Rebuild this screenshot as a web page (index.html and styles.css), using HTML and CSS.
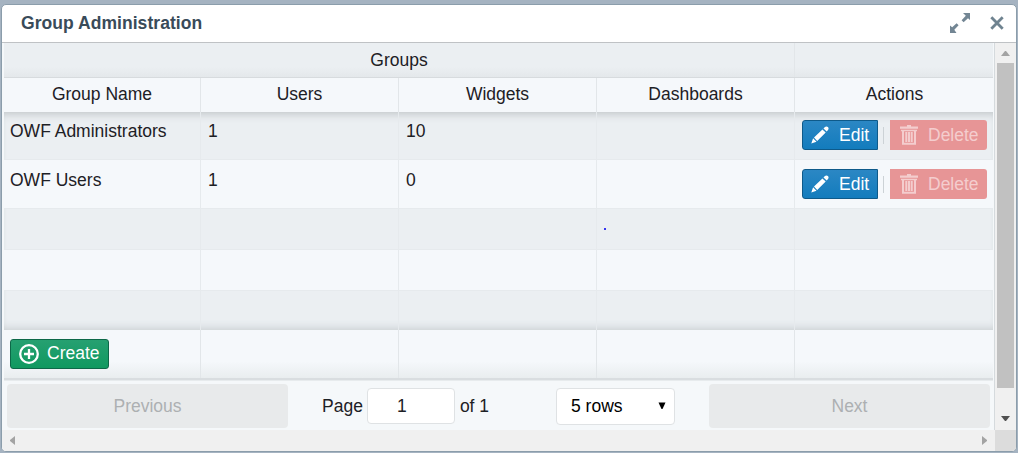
FILE: index.html
```html
<!DOCTYPE html>
<html lang="en">
<head>
<meta charset="utf-8">
<title>Group Administration</title>
<link rel="stylesheet" href="styles.css">
</head>
<body>
<svg class="sprite" aria-hidden="true">
  <symbol id="pencil" viewBox="0 0 18 18">
    <path d="M13.4 1.5Q15.4-.3 16.9 1.1 18.4 2.6 16.6 4.6L15.7 5.5 12.5 2.4zM11.4 3.4 14.7 6.6 6.2 14.9 3 11.6zM2.1 12.3 5.5 15.7.3 17.6z" fill="currentColor"/>
  </symbol>
  <symbol id="trash" viewBox="0 0 18 20">
    <path d="M7 0h4v1.5h7v2.3H0V1.5h7zM1 4.8h16v1.4H1z" fill="currentColor"/>
    <path d="M3 6v12.8h12V6M6.3 7v10M9 7v10M11.7 7v10" fill="none" stroke="currentColor" stroke-width="2"/>
  </symbol>
</svg>
<main class="window">
  <header class="titlebar">
    <h1 class="title">Group Administration</h1>
    <svg class="expand" viewBox="0 0 20 20"><path d="M13 0h7v7l-2-1.7-4.4 3.9-2-2 4.2-4.4zM0 20v-7.5l2.2 1.8 4.4-4 2 2-4.3 4.4L6.5 20z"/></svg>
    <svg class="close" viewBox="0 0 14 14"><path d="M1.3 1.3 12.7 12.7M12.7 1.3 1.3 12.7"/></svg>
  </header>
  <div class="body">
    <div class="content">
      <div class="row groups"><div class="cell span">Groups</div><div class="cell"></div></div>
      <div class="row head"><div class="cell">Group Name</div><div class="cell">Users</div><div class="cell">Widgets</div><div class="cell">Dashboards</div><div class="cell">Actions</div></div>
      <div class="rows">
        <div class="row item"><div class="cell">OWF Administrators</div><div class="cell num">1</div><div class="cell num">10</div><div class="cell"></div>
          <div class="cell actions"><button class="btn edit"><svg><use href="#pencil"/></svg>Edit</button><i class="divider"></i><button class="btn delete"><svg><use href="#trash"/></svg>Delete</button></div></div>
        <div class="row item alt"><div class="cell">OWF Users</div><div class="cell num">1</div><div class="cell num">0</div><div class="cell"></div>
          <div class="cell actions"><button class="btn edit"><svg><use href="#pencil"/></svg>Edit</button><i class="divider"></i><button class="btn delete"><svg><use href="#trash"/></svg>Delete</button></div></div>
        <div class="row pad"><div class="cell"></div><div class="cell"></div><div class="cell"></div><div class="cell"><i class="dot"></i></div><div class="cell"></div></div>
        <div class="row pad alt"><div class="cell"></div><div class="cell"></div><div class="cell"></div><div class="cell"></div><div class="cell"></div></div>
        <div class="row pad last"><div class="cell"></div><div class="cell"></div><div class="cell"></div><div class="cell"></div><div class="cell"></div></div>
      </div>
      <div class="row foot"><div class="cell"><button class="btn create"><svg viewBox="0 0 20 20"><circle cx="10" cy="10" r="8.8"/><path d="M10 5v10M5 10h10"/></svg>Create</button></div><div class="cell"></div><div class="cell"></div><div class="cell"></div><div class="cell"></div></div>
      <div class="pager">
        <button class="nav">Previous</button>
        <div class="page-info"><span>Page</span><span class="page-input">1</span><span>of 1</span></div>
        <div class="select"><span>5 rows</span><svg viewBox="0 0 8 8"><path d="M.5 .5h7L4.5 7h-1z"/></svg></div>
        <button class="nav">Next</button>
      </div>
    </div>
    <div class="vbar">
      <svg viewBox="0 0 9 5"><path d="M4 0h1l4 5H0z" fill="#a3a3a3"/></svg>
      <div class="thumb"></div>
      <svg viewBox="0 0 9 5"><path d="M0 0h9L5 5H4z" fill="#505050"/></svg>
    </div>
    <div class="hbar">
      <svg viewBox="0 0 5 9"><path d="M5 0v9L0 5V4z"/></svg>
      <svg viewBox="0 0 5 9"><path d="M0 0v9l5-4V4z"/></svg>
    </div>
    <div class="corner"></div>
  </div>
</main>
</body>
</html>
```
FILE: styles.css
```css
* { box-sizing: border-box; }
body {
  margin: 0;
  height: 453px;
  padding: 4px 1px 1px;
  overflow: hidden;
  background: #a5b3c1;
  color: #1d2025;
  font: 17.5px/20px "Liberation Sans", Arial, sans-serif;
}
button { font: inherit; border: 0; padding: 0; }
svg { display: block; flex: none; }
.sprite { position: absolute; width: 0; height: 0; }
.window {
  display: flex;
  flex-direction: column;
  height: 448px;
  overflow: hidden;
  border: 1px solid #8b9dab;
  border-radius: 5px;
  background: #fff;
}
.titlebar {
  display: flex;
  align-items: center;
  height: 38px;
  flex: none;
  padding: 0 12px 1px 19px;
  border-bottom: 1px solid #bfc2c5;
}
.title { margin: 0; flex: 1; font-size: 17.5px; line-height: 20px; letter-spacing: .05px; color: #394b59; }
.expand { width: 20px; height: 20px; margin-right: 20px; fill: #738694; }
.close { width: 14px; height: 14px; fill: none; stroke: #6f8390; stroke-width: 2.8; }
.body { flex: 1; display: grid; grid-template: 387px 21px / 993px 21px; }
.content { padding: 0 1px 0 2px; border-right: 1px solid #d5dadd; background: #f5f8fa; }
.row { display: grid; grid-template-columns: 197px 198px 198px 198px 199px; background: #ebeff2; }
.cell { padding: 0 6px; border-right: 1px solid #e2e6e9; }
.cell:last-child { border-right: 0; }
.num { padding-left: 7px; }
.groups {
  height: 35px;
  grid-template-columns: 791px 199px;
  line-height: 34px;
  border-bottom: 1px solid #d7dbde;
  background: linear-gradient(#ebeff2 70%, #e4e8eb);
}
.span { text-align: center; }
.head { height: 34px; line-height: 32px; text-align: center; background: #f5f8fb; }
.rows {
  height: 218px;
  background: #ebeff2;
  box-shadow: inset 0 8px 9px -6px #bfc4c7, inset 0 -8px 10px -7px #c4c9cc;
}
.rows .row { background: transparent; border-bottom: 1px solid #e6eaed; }
.rows .cell { border-right-color: #e6eaed; }
.rows .alt { background: #f5f8fb; }
.rows .last { border-bottom: 0; }
.item { height: 49px; line-height: 38px; }
.item:first-child { height: 48px; }
.item.alt .cell { padding-top: 1px; }
.pad { height: 41px; }
.actions { display: flex; padding: 8px 7px 0; }
.item.alt .actions { padding-top: 9px; }
.dot { display: block; width: 2px; height: 2px; margin: 19px 0 0 1px; background: #3535f0; }
.btn { display: flex; align-items: center; height: 30px; line-height: 26px; color: #fff; }
.edit {
  width: 76px;
  padding: 0 0 0 8px;
  border: 1px solid #0e5a8a;
  border-radius: 3px 0 0 3px;
  background: linear-gradient(#2b87c4, #137cbd);
}
.edit svg { width: 18px; height: 18px; margin-right: 10px; }
.divider { width: 1px; height: 17px; margin: 7px 6px 0 5px; background: #ccd2d6; }
.delete {
  width: 97px;
  padding-left: 10px;
  border-radius: 0 3px 3px 0;
  background: #e79596;
  color: #f4cdce;
}
.delete svg { width: 18px; height: 20px; margin-right: 10px; }
.foot { height: 48px; background: linear-gradient(#f5f8fb 65%, #e9edef); }
.foot .cell { padding-top: 9px; }
.create {
  width: 99px;
  padding: 0 0 1px 8px;
  border: 1px solid #0d6848;
  border-radius: 3px;
  background: linear-gradient(#26a071, #109960);
  line-height: 25px;
}
.create svg { width: 20px; height: 20px; margin: 1px 8px 0 0; fill: none; stroke: #fff; stroke-width: 2.3; }
.pager {
  display: flex;
  height: 52px;
  padding: 4px 3px 0;
  border-top: 2px solid #d9dde0;
  box-shadow: inset 0 1px #e7ebed;
}
.nav { width: 281px; height: 44px; border-radius: 4px; background: #e8eaeb; color: #adb0b2; }
.page-info { display: flex; align-items: center; width: 268px; height: 44px; padding-left: 34px; }
.page-input {
  width: 88px;
  height: 36px;
  margin: 0 5px 0 4px;
  padding-left: 29px;
  border: 1px solid #dfe2e4;
  border-radius: 4px;
  background: #fff;
  line-height: 34px;
}
.select {
  display: flex;
  align-items: center;
  justify-content: space-between;
  width: 119px;
  height: 37px;
  margin: 4px 34px 0 0;
  padding: 0 8px 2px 14px;
  border: 1px solid #dfe2e4;
  border-radius: 4px;
  background: #fff;
  color: #000;
}
.select svg { width: 8px; height: 8px; }
.vbar { display: flex; flex-direction: column; align-items: center; padding: 8px 0 9px; background: #f0f0f0; }
.vbar svg { width: 9px; height: 5px; }
.thumb { width: 17px; height: 325px; margin: 7px 0 28px; background: #c1c1c1; }
.hbar { display: flex; justify-content: space-between; padding: 6px 8px 0; background: #f0f0f0; }
.hbar svg { width: 5px; height: 9px; fill: #a3a3a3; }
.corner { background: #dcdcdc; }
```
